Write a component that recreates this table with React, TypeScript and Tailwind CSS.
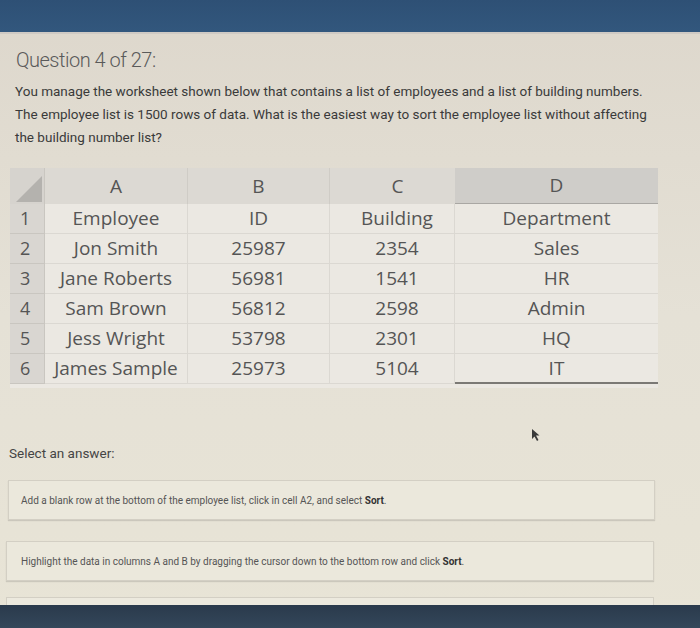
import React from "react";

const rows = [
  ["1", "Employee", "ID", "Building", "Department"],
  ["2", "Jon Smith", "25987", "2354", "Sales"],
  ["3", "Jane Roberts", "56981", "1541", "HR"],
  ["4", "Sam Brown", "56812", "2598", "Admin"],
  ["5", "Jess Wright", "53798", "2301", "HQ"],
  ["6", "James Sample", "25973", "5104", "IT"],
];

export default function App() {
  return (
    <div className="relative w-[700px] h-[628px] overflow-hidden flex flex-col bg-gradient-to-b from-[#ddd7cc] via-[#e5e1d6] to-[#e8e4d6]" style={{ fontFamily: "Roboto, 'Liberation Sans', sans-serif" }}>
      <div className="h-[34px] shrink-0 bg-gradient-to-b from-[#2e5075] to-[#32577d] border-b-2 border-[#cfcac4]" />
      <div className="flex-1 overflow-hidden flex flex-col">
        <div className="pl-[16px] pt-[14px] text-[20px] leading-[24px] font-light text-[#5a5a5a] tracking-[-0.5px]">Question 4 of 27:</div>
        <div className="pl-[15px] mt-[8px] text-[13.5px] leading-[23px] text-[#3a3a3a]">
          <div className="whitespace-nowrap">You manage the worksheet shown below that contains a list of employees and a list of building numbers.</div>
          <div className="whitespace-nowrap">The employee list is 1500 rows of data. What is the easiest way to sort the employee list without affecting</div>
          <div className="whitespace-nowrap">the building number list?</div>
        </div>

        <div className="ml-[10px] mt-[19px] w-[648px] bg-[#ebe8e2] pb-[4px] text-[#555555]" style={{ fontFamily: "'Open Sans', 'Noto Sans', sans-serif" }}>
          <div className="flex h-[36px] text-[19px]">
            <div className="w-[35px] bg-[#d6d3ce] border-r border-[#c9c6c0] flex items-end justify-end pb-[2px] pr-[2px]">
              <svg width="26" height="26" viewBox="0 0 26 26"><polygon points="26,0 26,26 0,26" fill="#b4b2ae" /></svg>
            </div>
            <div className="w-[143px] bg-[#dcd9d3] border-r border-[#cfccc6] flex items-center justify-center">A</div>
            <div className="w-[142px] bg-[#dcd9d3] border-r border-[#cfccc6] flex items-center justify-center">B</div>
            <div className="w-[125px] bg-[#dcd9d3] flex items-center justify-center pl-[10px]">C</div>
            <div className="w-[203px] bg-[#cfcdc9] border-b border-[#a9a7a3] flex items-center justify-center">D</div>
          </div>
          {rows.map((r, i) => (
            <div key={i} className="flex h-[30px] text-[19px]">
              <div className="w-[35px] bg-[#d9d6d1] border-r border-b border-[#c9c6c0] flex items-center pl-[10px] text-[18px]">{r[0]}</div>
              <div className="w-[143px] border-r border-b border-[#dbd8d2] flex items-center justify-center">{r[1]}</div>
              <div className="w-[142px] border-r border-b border-[#dbd8d2] flex items-center justify-center">{r[2]}</div>
              <div className="w-[125px] border-r border-b border-[#dbd8d2] flex items-center justify-center pl-[10px]">{r[3]}</div>
              <div className={"w-[203px] flex items-center justify-center " + (i === 5 ? "border-b-2 border-[#7b7975]" : "border-b border-[#dbd8d2]")}>{r[4]}</div>
            </div>
          ))}
        </div>

        <div className="pl-[9px] mt-[56px] text-[13.5px] leading-[18px] text-[#454545]">Select an answer:</div>

        <div className="ml-[8px] mt-[18px] w-[647px] h-[40px] shrink-0 border border-[#d3cfc4] bg-[#ebe8dc] shadow-[0_1px_1px_rgba(0,0,0,0.12)] flex items-center pl-[12px] text-[10px] text-[#555]">
          <span>Add a blank row at the bottom of the employee list, click in cell A2, and select <b className="text-[#333]">Sort</b>.</span>
        </div>
        <div className="ml-[6px] mt-[21px] w-[648px] h-[40px] shrink-0 border border-[#d3cfc4] bg-[#ebe8dc] shadow-[0_1px_1px_rgba(0,0,0,0.12)] flex items-center pl-[14px] text-[10px] text-[#555]">
          <span>Highlight the data in columns A and B by dragging the cursor down to the bottom row and click <b className="text-[#333]">Sort</b>.</span>
        </div>
        <div className="ml-[6px] mt-[16px] w-[648px] h-[40px] shrink-0 border border-[#d3cfc4] bg-[#ece9de]" />
      </div>
      <div className="h-[23px] shrink-0 bg-gradient-to-b from-[#2a3a4c] to-[#34475a]" />

      <svg className="absolute left-[531px] top-[428px]" width="10" height="14" viewBox="0 0 10 14">
        <polygon points="1,1 1,11 3.5,8.5 6,13 7.5,12 5,7.5 8.5,7.5" fill="#3a3a3a" />
      </svg>
    </div>
  );
}
